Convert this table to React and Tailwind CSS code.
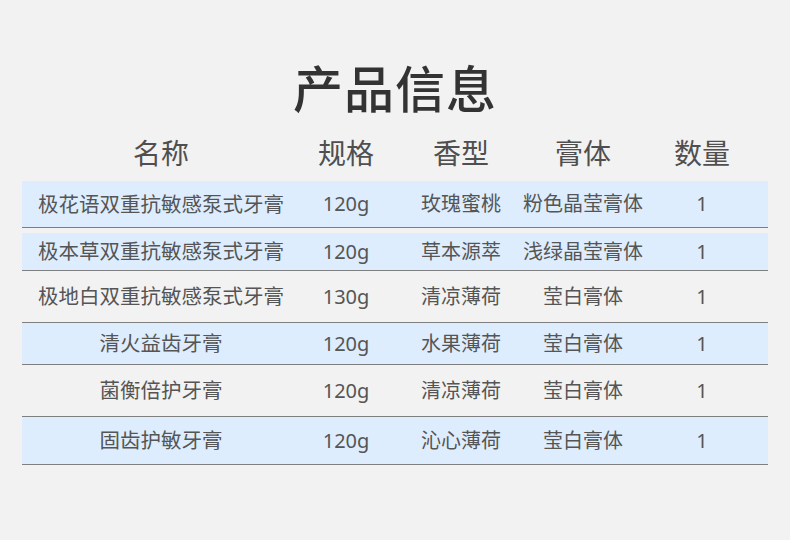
const font = { fontFamily: '"Noto Sans", "Noto Sans CJK SC", sans-serif' };

const rows = [
  { name: "极花语双重抗敏感泵式牙膏", spec: "120g", scent: "玫瑰蜜桃", paste: "粉色晶莹膏体", qty: "1", h: "h-[46px]", blue: true, mt: "mt-0" },
  { name: "极本草双重抗敏感泵式牙膏", spec: "120g", scent: "草本源萃", paste: "浅绿晶莹膏体", qty: "1", h: "h-[37px]", blue: true, mt: "mt-[5px]" },
  { name: "极地白双重抗敏感泵式牙膏", spec: "130g", scent: "清凉薄荷", paste: "莹白膏体", qty: "1", h: "h-[51px]", blue: false, mt: "mt-0" },
  { name: "清火益齿牙膏", spec: "120g", scent: "水果薄荷", paste: "莹白膏体", qty: "1", h: "h-[41px]", blue: true, mt: "mt-0" },
  { name: "菌衡倍护牙膏", spec: "120g", scent: "清凉薄荷", paste: "莹白膏体", qty: "1", h: "h-[51px]", blue: false, mt: "mt-0" },
  { name: "固齿护敏牙膏", spec: "120g", scent: "沁心薄荷", paste: "莹白膏体", qty: "1", h: "h-[47px]", blue: true, mt: "mt-0" },
];

const cols = ["w-[278px]", "w-[92px]", "w-[138px]", "w-[106px]", "w-[132px]"];

function Cell({ w, children, extra = "" }) {
  return <div className={`${w} flex justify-center whitespace-nowrap ${extra}`}>{children}</div>;
}

export default function App() {
  return (
    <div className="w-[790px] h-[540px] bg-[#f2f2f2] overflow-hidden" style={font}>
      <div className="pt-[60px] flex justify-center">
        <h1 className="text-[50px] leading-[58px] font-medium text-[#333] tracking-[1px]">产品信息</h1>
      </div>
      <div className="mt-[10px] ml-[22px] flex items-center h-[50px] text-[28px] text-[#4f4f4f]">
        <Cell w={cols[0]}>名称</Cell>
        <Cell w={cols[1]}>规格</Cell>
        <Cell w={cols[2]}>香型</Cell>
        <Cell w={cols[3]}>膏体</Cell>
        <Cell w={cols[4]}>数量</Cell>
      </div>
      <div className="mt-[3px] ml-[22px] w-[746px] flex flex-col text-[20px] text-[#555]">
        {rows.map((r, i) => (
          <div key={i} className={`${r.mt} border-b border-[#7f7f7f]`}>
            <div className={`${r.h} ${r.blue ? "bg-[#deedfd]" : ""} flex items-center`}>
              <Cell w={cols[0]} extra="text-[20.5px]">{r.name}</Cell>
              <Cell w={cols[1]}>{r.spec}</Cell>
              <Cell w={cols[2]}>{r.scent}</Cell>
              <Cell w={cols[3]}>{r.paste}</Cell>
              <Cell w={cols[4]}>{r.qty}</Cell>
            </div>
          </div>
        ))}
      </div>
    </div>
  );
}
